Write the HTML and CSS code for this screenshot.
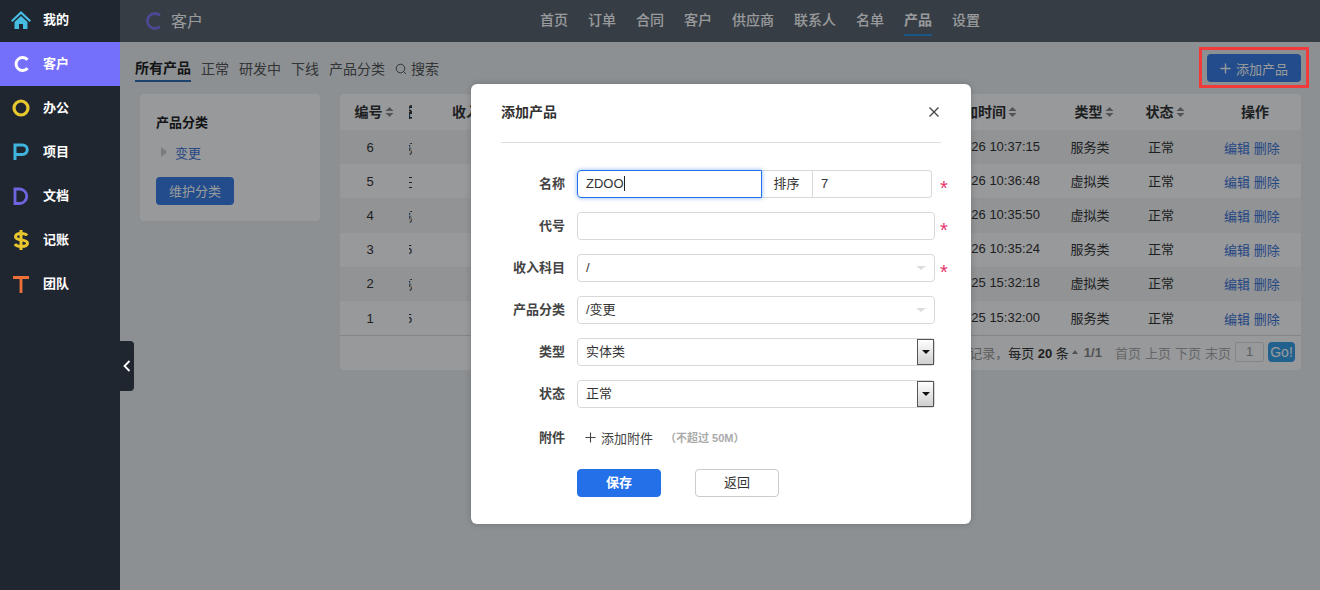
FILE: index.html
```html
<!DOCTYPE html>
<html lang="zh">
<head>
<meta charset="utf-8">
<title>添加产品</title>
<link rel="stylesheet" href="styles.css">
</head>
<body>
<svg class="defs" width="0" height="0"><symbol id="sort" viewBox="0 0 9 12"><path d="M4.500 1 8.500 5H.5zM4.500 11 .5 7h8z" fill="currentColor"/></symbol></svg>
<div class="app">
  <aside class="sidebar">
    <nav class="side-nav">
      <a class="side-item"><svg class="side-icon" viewBox="0 0 22 22"><path d="M11 2 1 11.500l1.500 1.500L11 5l8.500 8 1.500-1.500z" fill="#46bde0"/><path d="M4.500 13 11 7l6.500 6v7h-4.500v-5h-4v5H4.500z" fill="#46bde0"/></svg><span>我的</span></a>
      <a class="side-item active"><svg class="side-icon" viewBox="0 0 22 22"><path d="M17.500 6.800A6.500 6.500 0 1 0 17.500 15.200" fill="none" stroke="#fff" stroke-width="3"/></svg><span>客户</span></a>
      <a class="side-item"><svg class="side-icon" viewBox="0 0 22 22"><circle cx="11" cy="11" r="7" fill="none" stroke="#e8c62e" stroke-width="3.200"/></svg><span>办公</span></a>
      <a class="side-item"><svg class="side-icon" viewBox="0 0 22 22"><path d="M5 19V4h7.500a4.700 4.700 0 0 1 0 9.500H5" fill="none" stroke="#3fb4dc" stroke-width="3"/></svg><span>项目</span></a>
      <a class="side-item"><svg class="side-icon" viewBox="0 0 22 22"><path d="M5 4v14.500h4.500a7.200 7.200 0 0 0 0-14.500z" fill="none" stroke="#6d66e0" stroke-width="2.800"/></svg><span>文档</span></a>
      <a class="side-item"><svg class="side-icon" viewBox="0 0 22 22"><path d="M17 6.500c-1-1.500-3-2-6-2-3.500 0-5.500 1-5.500 3.200 0 5 12 1.500 12 6.600 0 2.200-2.500 3.200-6 3.200-3.300 0-5.500-.8-6.500-2.500" fill="none" stroke="#e8c62e" stroke-width="3"/><path d="M11 1v20" stroke="#e8c62e" stroke-width="3"/></svg><span>记账</span></a>
      <a class="side-item"><svg class="side-icon" viewBox="0 0 22 22"><path d="M3 4.500h16M11 4.500V20" fill="none" stroke="#f0703a" stroke-width="2.800"/></svg><span>团队</span></a>
    </nav>
  </aside>
  <main class="main">
    <header class="topbar">
      <div class="brand"><svg class="brand-icon" viewBox="0 0 16 18"><path d="M14 3.500A7.500 7.500 0 1 0 14 14.500" fill="none" stroke="#7d78f0" stroke-width="2.800"/></svg><span>客户</span></div>
      <nav class="top-nav">
        <a>首页</a><a>订单</a><a>合同</a><a>客户</a><a>供应商</a><a>联系人</a><a>名单</a><a class="current">产品</a><a>设置</a>
      </nav>
    </header>
    <div class="toolbar">
      <div class="tabs">
        <a class="tab selected">所有产品</a><a class="tab">正常</a><a class="tab">研发中</a><a class="tab">下线</a><a class="tab">产品分类</a>
        <a class="tab search"><svg class="search-icon" viewBox="0 0 12 12"><circle cx="5.500" cy="5.500" r="4.300" fill="none" stroke="currentColor"/><path d="m8.500 8.500 2.500 2.500" stroke="currentColor"/></svg>搜索</a>
      </div>
      <div class="add-wrap">
        <a class="btn-primary add-btn"><svg class="plus" viewBox="0 0 12 12"><path d="M6 .5v11M.5 6h11" stroke="currentColor" stroke-width="1.500"/></svg>添加产品</a>
        <span class="annot"></span>
      </div>
    </div>
    <div class="content">
      <section class="tree-panel">
        <h3>产品分类</h3>
        <div class="tree-node"><i class="caret"></i><a class="link">变更</a></div>
        <a class="btn-primary tree-btn">维护分类</a>
      </section>
      <section class="table-panel">
        <table class="grid">
          <colgroup><col class="c-num"><col class="c-name"><col class="c-inc"><col class="c-time"><col class="c-type"><col class="c-status"><col class="c-act"></colgroup>
          <thead>
            <tr>
              <th class="sorted">编号<svg class="sort"><use href="#sort"/></svg></th>
              <th class="clip"><span class="sliver">名称</span></th>
              <th class="inc">收入科目</th>
              <th class="time">添加时间<svg class="sort"><use href="#sort"/></svg></th>
              <th class="sorted">类型<svg class="sort"><use href="#sort"/></svg></th>
              <th class="sorted">状态<svg class="sort"><use href="#sort"/></svg></th>
              <th class="act-h">操作</th>
            </tr>
          </thead>
          <tbody>
            <tr><td class="num">6</td><td class="num"><span class="sliver">初级</span></td><td></td><td class="time">2021-03-26 10:37:15</td><td>服务类</td><td>正常</td><td class="act"><a class="link">编辑</a> <a class="link">删除</a></td></tr>
            <tr><td class="num">5</td><td class="num"><span class="sliver">三级</span></td><td></td><td class="time">2021-03-26 10:36:48</td><td>虚拟类</td><td>正常</td><td class="act"><a class="link">编辑</a> <a class="link">删除</a></td></tr>
            <tr><td class="num">4</td><td class="num"><span class="sliver">初级</span></td><td></td><td class="time">2021-03-26 10:35:50</td><td>虚拟类</td><td>正常</td><td class="act"><a class="link">编辑</a> <a class="link">删除</a></td></tr>
            <tr><td class="num">3</td><td class="num"><span class="sliver">5G</span></td><td></td><td class="time">2021-03-26 10:35:24</td><td>服务类</td><td>正常</td><td class="act"><a class="link">编辑</a> <a class="link">删除</a></td></tr>
            <tr><td class="num">2</td><td class="num"><span class="sliver">初级</span></td><td></td><td class="time">2021-03-25 15:32:18</td><td>虚拟类</td><td>正常</td><td class="act"><a class="link">编辑</a> <a class="link">删除</a></td></tr>
            <tr><td class="num">1</td><td class="num"><span class="sliver">5G</span></td><td></td><td class="time">2021-03-25 15:32:00</td><td>服务类</td><td>正常</td><td class="act"><a class="link">编辑</a> <a class="link">删除</a></td></tr>
          </tbody>
        </table>
        <footer class="pager">
          <span class="rec">记录，</span><span class="per">每页 <b>20</b> 条</span><i class="up"></i><b class="pages">1/1</b>
          <span class="pg-links"><a>首页</a><a>上页</a><a>下页</a><a>末页</a></span>
          <span class="pg-input">1</span><a class="go">Go!</a>
        </footer>
      </section>
    </div>
    <div class="overlay">
      <div class="modal">
        <div class="modal-head"><h2>添加产品</h2><svg class="close" viewBox="0 0 10 10"><path d="m.5.500 9 9m0-9-9 9" stroke="#444" stroke-width="1.300"/></svg></div>
        <form class="form">
          <div class="row">
            <label>名称</label>
            <div class="group">
              <div class="input focus">ZDOO<i class="cursor"></i></div>
              <div class="addon">排序</div>
              <div class="input order">7</div>
            </div>
            <em class="req">*</em>
          </div>
          <div class="row"><label>代号</label><div class="input wide"></div><em class="req">*</em></div>
          <div class="row"><label>收入科目</label><div class="input wide chosen">/<i class="chosen-arrow"></i></div><em class="req">*</em></div>
          <div class="row"><label>产品分类</label><div class="input wide chosen">/变更<i class="chosen-arrow"></i></div></div>
          <div class="row"><label>类型</label><div class="input wide native">实体类<span class="drop"><i></i></span></div></div>
          <div class="row"><label>状态</label><div class="input wide native">正常<span class="drop"><i></i></span></div></div>
          <div class="row files"><label>附件</label><a class="attach"><svg class="plus dark" viewBox="0 0 12 12"><path d="M6 .5v11M.5 6h11" stroke="currentColor" stroke-width="1.200"/></svg>添加附件</a><span class="hint">（不超过 50M）</span></div>
          <div class="actions"><a class="btn-save">保存</a><a class="btn-back">返回</a></div>
        </form>
      </div>
    </div>
    <a class="collapse"><svg viewBox="0 0 8 12"><path d="M6.500 1 1.500 6l5 5" fill="none" stroke="#fff" stroke-width="1.800"/></svg></a>
  </main>
</div>
</body>
</html>
```

FILE: styles.css
```css
* { box-sizing: border-box; }
html, body { margin: 0; height: 100%; overflow: hidden; }
body {
  font-family: "Liberation Sans", "Noto Sans CJK SC", sans-serif;
  font-size: 13px;
  color: #333;
  background: #ebeff2;
}
a { text-decoration: none; color: inherit; }
.defs { position: absolute; }
.app { display: flex; height: 590px; }

/* sidebar */
.sidebar { width: 120px; flex: none; background: #1f2630; position: relative; z-index: 30; overflow: hidden; }
.side-nav { display: flex; flex-direction: column; margin-top: -2px; }
.side-item { height: 44px; display: flex; align-items: center; padding-left: 10px; gap: 11px; color: #fff; font-weight: 700; line-height: 44px; }
.side-item.active { background: #7570fb; }
.side-icon { width: 22px; height: 22px; flex: none; }

/* main */
.main { flex: 1; position: relative; min-width: 0; display: flex; flex-direction: column; }
.topbar { height: 42px; flex: none; background: #5a6470; display: flex; align-items: center; position: relative; color: #fff; }
.brand { display: flex; align-items: center; gap: 9px; padding: 0 0 3px 26px; font-size: 16px; width: 420px; flex: none; color: #fff; }
.brand-icon { width: 16px; height: 18px; margin-top: 3px; }
.top-nav { display: flex; gap: 20px; font-size: 14px; font-weight: 500; height: 42px; line-height: 40px; }
.top-nav a { height: 36px; }
.top-nav .current { font-weight: 700; border-bottom: 2px solid #2b8fdc; }

.toolbar { height: 52px; flex: none; display: flex; justify-content: space-between; align-items: center; padding: 0 19px 0 15px; }
.tabs { display: flex; gap: 10px; font-size: 14px; color: #555; height: 26px; line-height: 24px; margin-top: 1px; }
.tab { display: flex; align-items: center; height: 26px; }
.tab.selected { font-weight: 700; color: #222; border-bottom: 2px solid #2f6fb4; }
.search-icon { width: 12px; height: 12px; margin-right: 4px; }
.add-wrap { position: relative; display: flex; }
.btn-primary { background: #3a7ee4; color: #fff; border-radius: 4px; display: flex; align-items: center; justify-content: center; height: 28px; }
.add-btn { width: 94px; font-size: 13px; }
.plus { width: 11px; height: 11px; margin-right: 5px; }
.annot { position: absolute; inset: -7px -8px -6px -8px; border: 3px solid #f23a3a; z-index: 20; }

.content { flex: 1; display: flex; align-items: flex-start; padding-left: 20px; gap: 20px; }
.tree-panel { width: 180px; height: 127px; background: #fdfdfe; border-radius: 4px; padding: 21px 16px; }
.tree-panel h3 { margin: 0; font-size: 13px; line-height: 16px; font-weight: 700; color: #222; }
.tree-node { display: flex; align-items: center; height: 20px; margin: 11px 0 15px; padding-left: 5px; }
.caret { width: 0; height: 0; border-left: 6px solid #ccc; border-top: 5px solid transparent; border-bottom: 5px solid transparent; margin-right: 8px; }
.link { color: #3d75d8; }
.tree-btn { width: 78px; font-size: 13px; padding-bottom: 2px; }

.table-panel { width: 961px; background: #fdfdfe; border-radius: 4px; overflow: hidden; }
.grid { width: 100%; border-collapse: collapse; table-layout: fixed; text-align: center; }
.c-num { width: 60px; } .c-name { width: 20px; } .c-inc { width: 120px; } .c-time { width: 510px; }
.c-type { width: 80px; } .c-status { width: 62px; } .c-act { width: 109px; }
.grid th { height: 36px; font-size: 14px; font-weight: 700; padding: 0 0 2px; color: #333; white-space: nowrap; overflow: hidden; }
.grid td { height: 34.200px; padding: 0 0 2px; white-space: nowrap; overflow: hidden; }
.grid td.num { padding-bottom: 0; }
.grid tbody tr:nth-child(odd) { background: #f2f4f6; }
.sort { width: 9px; height: 12px; margin-left: 2px; vertical-align: -1px; color: #8a8a8a; }
.sliver { display: block; width: 3px; margin-left: 9px; overflow: hidden; text-indent: -4px; }
.grid th.sorted { padding-left: 8px; }
.grid th.inc { text-align: left; padding-left: 32px; }
.grid td.time { text-align: right; padding-right: 10px; }
.grid th.time { text-align: right; padding-right: 33px; }
.grid th.act-h { padding-left: 17px; }
.grid td.act { text-align: left; padding: 0 0 0 32px; }
.pager { height: 35px; border-top: 1px solid #ddd; display: flex; align-items: center; justify-content: flex-end; padding: 0 6px 2px 0; color: #888; }
.rec { color: #999; }
.per { color: #333; }
.up { width: 0; height: 0; border-bottom: 4px solid #888; border-left: 3px solid transparent; border-right: 3px solid transparent; margin: 0 6px 0 3px; }
.pages { color: #888; margin-right: 13px; }
.pg-links { display: flex; gap: 4px; color: #aaa; }
.pg-input { width: 29px; height: 20px; margin-left: 4px; border: 1px solid #ddd; text-align: center; line-height: 18px; color: #999; border-radius: 2px; }
.go { width: 27px; height: 20px; margin-left: 4px; background: #38a0ea; color: #fff; border-radius: 4px; text-align: center; line-height: 20px; font-size: 14px; }

/* modal */
.overlay { position: absolute; inset: 0; z-index: 10; background: rgba(0, 2, 5, .4); display: flex; justify-content: center; align-items: flex-start; padding: 84px 0 0 2px; }
.modal { width: 500px; height: 440px; background: #fff; border-radius: 6px; padding: 0 30px; box-shadow: 0 0 6px rgba(0, 0, 0, .2); }
.modal-head { height: 59px; border-bottom: 1px solid #ddd; display: flex; align-items: center; justify-content: space-between; padding: 0 2px 5px 0; }
.modal-head h2 { margin: 0; font-size: 14px; font-weight: 700; color: #333; }
.close { width: 10px; height: 10px; margin-top: 2px; }
.form { padding-top: 27px; }
.row { display: flex; align-items: center; height: 28px; margin-bottom: 14px; }
.row label { width: 64px; margin-right: 12px; padding-bottom: 3px; text-align: right; font-weight: 700; color: #444; flex: none; }
.group { display: flex; width: 355px; flex: none; }
.input { height: 28px; border: 1px solid #d8d8d8; border-radius: 4px; padding-left: 8px; line-height: 26px; color: #333; position: relative; flex: none; }
.input.wide { width: 358px; }
.input.focus { width: 185px; border-color: #2370e8; border-radius: 4px 0 0 4px; box-shadow: 0 0 4px rgba(35, 112, 232, .55); }
.cursor { display: inline-block; width: 1px; height: 15px; background: #222; vertical-align: -3px; }
.addon { width: 51px; height: 28px; flex: none; border-top: 1px solid #d8d8d8; border-bottom: 1px solid #d8d8d8; border-right: 1px solid #d8d8d8; padding-right: 1px; line-height: 26px; text-align: center; color: #333; }
.input.order { width: 119px; border-left: 0; border-radius: 0 4px 4px 0; }
.req { width: 8px; margin-left: 5px; font-style: normal; font-size: 20px; line-height: 16px; height: 8px; color: #e8336d; font-family: "Liberation Sans", sans-serif; flex: none; }
.group + .req { margin-left: 8px; }
.chosen-arrow { position: absolute; right: 8px; top: 11px; width: 0; height: 0; border-top: 4px solid #ddd; border-left: 5px solid transparent; border-right: 5px solid transparent; }
.drop { position: absolute; right: 0; top: 0; width: 17px; height: 26px; border: 1px solid #555; background: linear-gradient(#fff, #cfcfcf); display: flex; align-items: center; justify-content: center; }
.drop i { width: 0; height: 0; border-top: 4px solid #111; border-left: 4px solid transparent; border-right: 4px solid transparent; }
.files { margin-top: 15px; margin-bottom: 18px; height: 28px; }
.files label { padding-bottom: 2px; }
.attach { display: flex; align-items: center; padding-left: 8px; color: #444; }
.hint { margin-left: 12px; font-size: 11px; color: #aaa; font-weight: 700; }
.actions { display: flex; padding-left: 76px; gap: 34px; }
.btn-save, .btn-back { width: 84px; height: 28px; border-radius: 4px; text-align: center; line-height: 26px; }
.btn-save { background: #2370e8; color: #fff; font-weight: 700; border: 1px solid #2370e8; }
.btn-back { border: 1px solid #ccc; color: #333; }

.collapse { position: absolute; left: 0; top: 341px; width: 14px; height: 50px; background: #1f2630; border-radius: 0 4px 4px 0; z-index: 20; display: flex; align-items: center; justify-content: center; }
.collapse svg { width: 8px; height: 12px; }
```
